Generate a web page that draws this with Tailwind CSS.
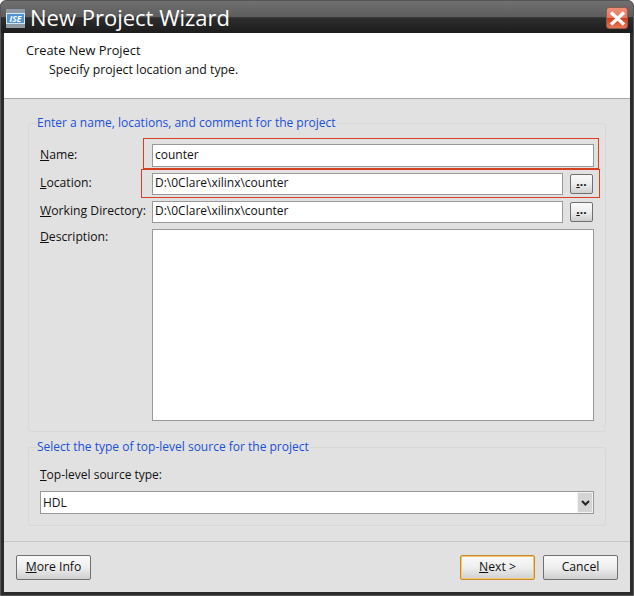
<!DOCTYPE html>
<html lang="en">
  <head>
    <meta charset="UTF-8" />
    <script src="https://cdn.jsdelivr.net/npm/@tailwindcss/browser@4"></script>
    <title>New Project Wizard</title>
  </head>
  <body class="bg-white font-['Open_Sans',sans-serif]">
    <div class="relative w-[634px] h-[596px] flex flex-col bg-[#2b2b2b] rounded-t-[6px] overflow-hidden border border-[#555] text-[12.2px] text-[#111]">
      <!-- Title bar -->
      <div class="h-[32px] shrink-0 flex items-center pl-[5px] pr-[5px] bg-[linear-gradient(#707070_0%,#5c5c5c_50%,#2e2e2e_52%,#1c1c1c_100%)]">
        <svg width="19" height="19" viewBox="0 0 19 19" class="mt-[3px]">
          <rect width="19" height="19" fill="#8f99a3" />
          <rect y="4" width="19" height="11" fill="#d7e6f3" />
          <rect x="1" y="5" width="17" height="9" fill="#4f93d3" />
          <text x="9.5" y="13" font-size="8.5" font-weight="700" font-style="italic" fill="#fff" text-anchor="middle">ISE</text>
        </svg>
        <span class="ml-[5px] text-[22px] leading-none text-white">New Project Wizard</span>
        <div class="ml-auto mt-[2px] w-[22px] h-[22px] rounded-[3px] border border-[#8a5a4a] flex items-center justify-center bg-[linear-gradient(#ee8f78_0%,#e67a60_48%,#d93a18_52%,#e8765a_100%)]">
          <svg width="17" height="15" viewBox="0 0 17 15">
            <path d="M2 1.5 L15 13.5 M15 1.5 L2 13.5" stroke="#fff" stroke-width="3.4" />
          </svg>
        </div>
      </div>

      <!-- Window body -->
      <div class="flex-1 mx-[3px] mb-[3px] flex flex-col bg-[#e1e1e1]">
        <div class="h-[66px] shrink-0 bg-white border-b border-[#a8a8a8] pl-[22px] pt-[8px] leading-[19px]">
          <p class="text-[12.8px]">Create New Project</p>
          <p class="pl-[23px] text-[12.3px]">Specify project location and type.</p>
        </div>

        <div class="flex-1 flex flex-col px-[24px] pt-[16px]">
          <!-- Project group -->
          <fieldset class="h-[317px] shrink-0 border border-[#d8d8d8] rounded-[3px] px-[11px]">
            <legend class="text-[12px] text-[#1a4fd8] ml-[-3px] leading-[16px]">Enter a name, locations, and comment for the project</legend>
            <div class="grid grid-cols-[112px_411px_30px] gap-y-[6px] mt-[13px] items-center">
              <span><span class="underline">N</span>ame:</span>
              <div class="col-span-2 h-[23px] w-[442px] bg-white border border-[#999] pl-[2px] text-[12px] leading-[19px]">counter</div>

              <span class="mt-[-2px]"><span class="underline">L</span>ocation:</span>
              <div class="h-[22px] bg-white border border-[#999] pl-[2px] text-[12px] leading-[18px]">D:\0Clare\xilinx\counter</div>
              <button class="ml-[7px] w-[23px] h-[20px] border border-[#707070] rounded-[2px] text-[12px] leading-[14px] font-bold pb-[5px] bg-[linear-gradient(#fafafa_0%,#eeeeee_50%,#cfcfcf_100%)]"><span class="underline">.</span>..</button>

              <span class="mt-[-2px]"><span class="underline">W</span>orking Directory:</span>
              <div class="h-[22px] bg-white border border-[#999] pl-[2px] text-[12px] leading-[18px]">D:\0Clare\xilinx\counter</div>
              <button class="ml-[7px] w-[23px] h-[20px] border border-[#707070] rounded-[2px] text-[12px] leading-[14px] font-bold pb-[5px] bg-[linear-gradient(#fafafa_0%,#eeeeee_50%,#cfcfcf_100%)]"><span class="underline">.</span>..</button>

              <span class="self-start leading-[15px]"><span class="underline">D</span>escription:</span>
              <div class="col-span-2 h-[192px] w-[442px] bg-white border border-[#999]"></div>
            </div>
          </fieldset>

          <!-- Source type group -->
          <fieldset class="h-[87px] mt-[7px] shrink-0 border border-[#d8d8d8] rounded-[3px] px-[11px]">
            <legend class="text-[12px] text-[#1a4fd8] ml-[-3px] leading-[16px]">Select the type of top-level source for the project</legend>
            <p class="mt-[12px] leading-[16px] text-[12px]"><span class="underline">T</span>op-level source type:</p>
            <div class="mt-[8px] h-[23px] w-[554px] bg-white border border-[#999] flex items-center pl-[2px]">
              <span class="text-[12px]">HDL</span>
              <div class="ml-auto w-[16px] h-full border border-[#f2f2f2] bg-[#d4d4d4] flex items-center justify-center">
                <svg width="9" height="6" viewBox="0 0 9 6"><path d="M1 1 L4.5 4.5 L8 1" fill="none" stroke="#222" stroke-width="2" /></svg>
              </div>
            </div>
          </fieldset>

          <!-- Footer -->
          <div class="mx-[-24px] mt-[15px] flex-1 border-t border-[#c6c6c6] flex items-start px-[12px] pt-[13px]">
            <button class="w-[75px] h-[25px] border border-[#707070] rounded-[2px] bg-[linear-gradient(#fafafa_0%,#eeeeee_50%,#cfcfcf_100%)]"><span class="underline">M</span>ore Info</button>
            <button class="ml-auto w-[75px] h-[25px] border border-[#c98a2e] rounded-[2px] shadow-[inset_0_0_0_1px_#f4c770] bg-[linear-gradient(#fafafa_0%,#eeeeee_50%,#cfcfcf_100%)]"><span class="underline">N</span>ext &gt;</button>
            <button class="ml-[8px] w-[75px] h-[25px] border border-[#707070] rounded-[2px] bg-[linear-gradient(#fafafa_0%,#eeeeee_50%,#cfcfcf_100%)]">Cancel</button>
          </div>
        </div>
      </div>

      <!-- Red annotation boxes drawn over the form -->
      <div class="absolute left-[142px] top-[137px] w-[456px] h-[31px] border border-[#d8401f]"></div>
      <div class="absolute left-[140px] top-[168px] w-[459px] h-[29px] border border-[#d8401f]"></div>
    </div>
  </body>
</html>
